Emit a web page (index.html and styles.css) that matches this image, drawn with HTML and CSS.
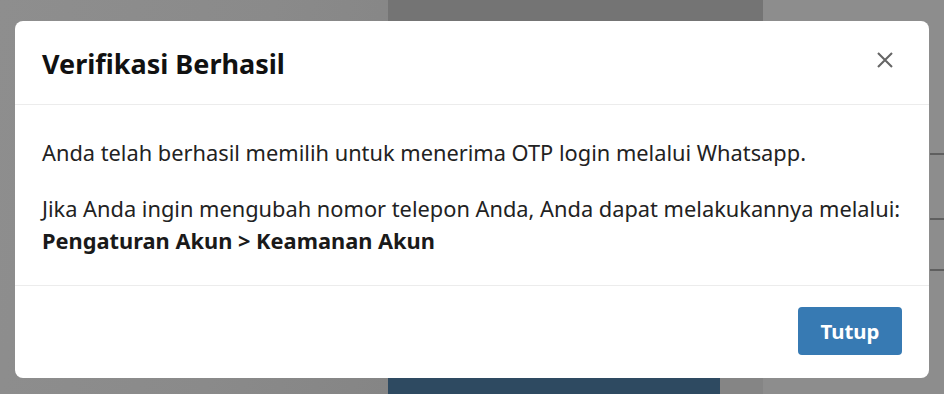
FILE: index.html
```html
<!DOCTYPE html>
<html lang="id">
<head>
<meta charset="utf-8">
<title>Verifikasi Berhasil</title>
<link rel="stylesheet" href="styles.css">
</head>
<body>
<div class="page">
  <div class="col col-left"></div>
  <div class="col col-mid">
    <div class="mid-top"></div>
    <div class="mid-bottom"><div class="navy"></div></div>
  </div>
  <div class="col col-right">
    <div class="rule r1"></div>
    <div class="rule r2"></div>
    <div class="rule r3"></div>
  </div>
</div>
<div class="modal" role="dialog" aria-labelledby="mtitle">
  <div class="modal-header">
    <h2 id="mtitle" class="modal-title">Verifikasi Berhasil</h2>
    <button class="close" aria-label="Tutup">
      <svg width="18" height="18" viewBox="0 0 18 18"><path d="M2 2 L16 16 M16 2 L2 16" stroke="#666" stroke-width="2.1" stroke-linecap="butt" fill="none"/></svg>
    </button>
  </div>
  <div class="modal-body">
    <p class="para">Anda telah berhasil memilih untuk menerima OTP login melalui Whatsapp.</p>
    <p class="para">Jika Anda ingin mengubah nomor telepon Anda, Anda dapat melakukannya melalui:<br><strong>Pengaturan Akun &gt; Keamanan Akun</strong></p>
  </div>
  <div class="modal-footer">
    <button class="btn">Tutup</button>
  </div>
</div>
</body>
</html>
```
FILE: styles.css
```css
* { box-sizing: border-box; }
html, body { margin: 0; padding: 0; }
body {
  width: 944px;
  height: 394px;
  overflow: hidden;
  font-family: "Noto Sans", "Open Sans", sans-serif;
  background: #8c8c8c;
  position: relative;
}
.page {
  display: grid;
  grid-template-columns: 388px 375px 1fr;
  height: 394px;
}
.col-left { background: linear-gradient(100deg, #8e8e8e 0%, #8a8a8a 60%, #858585 100%); }
.col-mid { display: flex; flex-direction: column; }
.mid-top { height: 21px; background: #747474; }
.mid-bottom { flex: 1; background: #858585; display: flex; flex-direction: column; justify-content: flex-end; }
.navy { height: 16px; width: 332px; background: #2e4a61; }
.col-right {
  background: #8d8d8d;
  display: flex;
  flex-direction: column;
}
.rule { height: 2px; background: #5f5f5f; margin-left: 167px; }
.r1 { margin-top: 153px; }
.r2 { margin-top: 63px; }
.r3 { margin-top: 49px; }

.modal {
  position: absolute;
  left: 15px;
  top: 21px;
  width: 914px;
  height: 357px;
  background: #fff;
  border-radius: 8px;
  display: flex;
  flex-direction: column;
  color: #1f1f1f;
}
.modal-header {
  height: 84px;
  border-bottom: 1px solid #ececec;
  display: flex;
  align-items: center;
  justify-content: space-between;
  padding: 0 35px 0 27px;
}
.modal-title {
  margin: 0;
  font-size: 27px;
  line-height: 36px;
  font-weight: 700;
  color: #111;
  padding-top: 2px;
}
.close {
  background: none;
  border: 0;
  padding: 0;
  width: 18px;
  height: 18px;
  display: flex;
  cursor: pointer;
  margin-top: -5px;
}
.modal-body {
  height: 181px;
  border-bottom: 1px solid #ececec;
  padding: 32px 27px 0;
}
.para {
  margin: 0 0 24px;
  font-size: 21.8px;
  line-height: 32px;
  color: #222;
}
.para strong { font-weight: 700; color: #1a1a1a; }
.modal-footer {
  flex: 1;
  display: flex;
  justify-content: flex-end;
  align-items: flex-start;
  padding: 21px 27px 0;
}
.btn {
  width: 104px;
  height: 48px;
  border: 0;
  border-radius: 4px;
  background: #377ab3;
  color: #fff;
  font-family: inherit;
  font-size: 20.4px;
  font-weight: 700;
  cursor: pointer;
}
```
